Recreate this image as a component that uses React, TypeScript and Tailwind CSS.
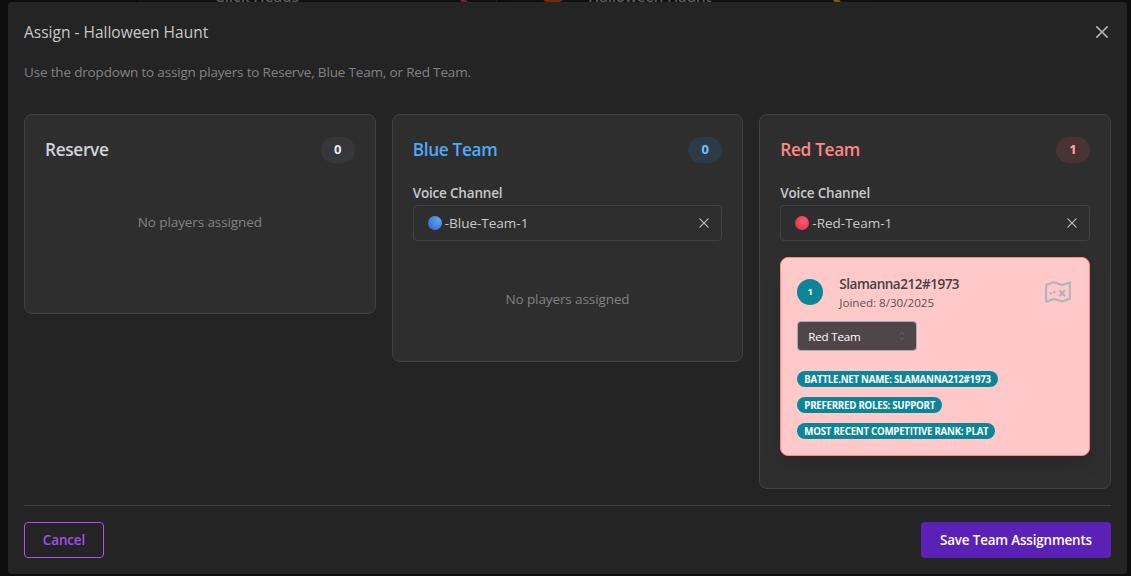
import React from 'react';

function CloseIcon({ className }: { className: string }) {
  return (
    <svg viewBox="0 0 15 15" className={className} fill="currentColor">
      <path
        fillRule="evenodd"
        clipRule="evenodd"
        d="M11.7816 4.03157C12.0062 3.80702 12.0062 3.44295 11.7816 3.2184C11.5571 2.99385 11.193 2.99385 10.9685 3.2184L7.50005 6.68682L4.03164 3.2184C3.80708 2.99385 3.44301 2.99385 3.21846 3.2184C2.99391 3.44295 2.99391 3.80702 3.21846 4.03157L6.68688 7.49999L3.21846 10.9684C2.99391 11.193 2.99391 11.557 3.21846 11.7816C3.44301 12.0061 3.80708 12.0061 4.03164 11.7816L7.50005 8.31316L10.9685 11.7816C11.193 12.0061 11.5571 12.0061 11.7816 11.7816C12.0062 11.557 12.0062 11.193 11.7816 10.9684L8.31322 7.49999L11.7816 4.03157Z"
      />
    </svg>
  );
}

function SortIcon() {
  return (
    <svg viewBox="0 0 15 15" className="size-3.5 text-[#6e6467]" fill="currentColor">
      <path
        fillRule="evenodd"
        clipRule="evenodd"
        d="M4.93179 5.43179C4.75605 5.60753 4.75605 5.89245 4.93179 6.06819C5.10753 6.24392 5.39245 6.24392 5.56819 6.06819L7.49999 4.13638L9.43179 6.06819C9.60753 6.24392 9.89245 6.24392 10.0682 6.06819C10.2439 5.89245 10.2439 5.60753 10.0682 5.43179L7.81819 3.18179C7.73379 3.0974 7.61933 3.04999 7.49999 3.04999C7.38064 3.04999 7.26618 3.0974 7.18179 3.18179L4.93179 5.43179ZM10.0682 9.56819C10.2439 9.39245 10.2439 9.10753 10.0682 8.93179C9.89245 8.75606 9.60753 8.75606 9.43179 8.93179L7.49999 10.8636L5.56819 8.93179C5.39245 8.75606 5.10753 8.75606 4.93179 8.93179C4.75605 9.10753 4.75605 9.39245 4.93179 9.56819L7.18179 11.8182C7.35753 11.9939 7.64245 11.9939 7.81819 11.8182L10.0682 9.56819Z"
      />
    </svg>
  );
}

function TreasureMapIcon() {
  return (
    <svg viewBox="0 0 26 22" className="mt-[7px] mr-0.5 h-[22px] w-[26px] text-[#adb5bd]" fill="none" stroke="currentColor" strokeWidth="2.1">
      <path d="M1.1 3.7 9 1.2l8 2.9 7.9-2.7v16.4L17 20.6l-8-2.7-7.9 2.8Z" strokeLinejoin="round" />
      <path d="m14.2 9.2 5.9 6M20.1 9.2l-5.9 6" strokeWidth="2.3" />
      <circle cx="5.7" cy="12.4" r="1.2" fill="currentColor" stroke="none" />
      <circle cx="9.3" cy="11.2" r="1.2" fill="currentColor" stroke="none" />
    </svg>
  );
}

type TeamProps = {
  name: string;
  count: number;
  titleClass: string;
  pillClass: string;
  className: string;
  children: React.ReactNode;
};

function Team({ name, count, titleClass, pillClass, className, children }: TeamProps) {
  return (
    <section className={`flex flex-col rounded-lg border border-[#424242] bg-[#2e2e2e] px-5 pt-[22px] ${className}`}>
      <div className="flex h-[26px] items-center justify-between">
        <h2 className={`text-[17.3px] font-semibold tracking-[-0.35px] ${titleClass}`}>{name}</h2>
        <span className={`flex h-[26px] w-[34px] items-center justify-center rounded-full text-[13px] font-bold ${pillClass}`}>
          {count}
        </span>
      </div>
      {children}
    </section>
  );
}

function VoiceChannel({ value, dotClass }: { value: string; dotClass: string }) {
  return (
    <div className="mt-5">
      <div className="h-[22px] text-[13.5px] leading-[21px] font-semibold tracking-[-0.18px] text-[#c9c9c9]">Voice Channel</div>
      <div className="flex h-9 items-center rounded border border-[#424242] bg-[#2e2e2e] pr-[9px] pl-[14px]">
        <span className={`mr-[3px] size-[14px] rounded-full ${dotClass}`} />
        <span className="flex-1 pt-px text-[13.5px] text-[#c9c9c9]">{value}</span>
        <CloseIcon className="size-4 text-[#b8b8b8]" />
      </div>
    </div>
  );
}

function Tag({ children }: { children: React.ReactNode }) {
  return (
    <span className="flex h-4 items-center rounded-full bg-[#0c8599] px-[7px] pt-px text-[9.7px] leading-none font-bold tracking-[-0.25px] text-white uppercase">
      {children}
    </span>
  );
}

function Empty() {
  return <p className="text-center text-[13.5px] leading-5 tracking-[-0.1px] text-[#828282]">No players assigned</p>;
}

export default function App() {
  return (
    <div className="relative h-[576px] w-[1131px] overflow-hidden bg-[#0e0e0e] pt-0.5 pl-2 font-['Open_Sans','Noto_Sans',sans-serif]">
      <div className="absolute top-0 left-[140px] h-0.5 w-[357px] border-x border-[#1c1c1c] bg-[#111]" />
      <div className="absolute top-0 left-[513px] h-0.5 w-[358px] border-x border-[#1c1c1c] bg-[#111]" />
      <span className="absolute -top-[14px] left-[215px] text-[15.2px] leading-5 font-semibold text-[#5a5a5a]">Click Heads</span>
      <span className="absolute -top-[14px] left-[588px] text-[15.2px] leading-5 font-semibold tracking-[-0.25px] text-[#5a5a5a]">Halloween Haunt</span>
      <svg className="absolute top-0 left-0 h-0.5 w-[1131px]" viewBox="0 0 1131 2">
        <path d="M460 0h6l2 2h-6z" fill="#7d1f2c" />
        <path d="M543 0h20l-3 2h-14z" fill="#6b2c0c" />
        <path d="M833 0h6l2 2h-6z" fill="#8a550c" />
      </svg>

      <main className="relative flex h-[572px] w-[1119px] flex-col rounded bg-[#242424] px-4">
        <header className="flex h-[60px] items-center justify-between">
          <h1 className="pt-px text-[15.5px] text-[#c9c9c9]">Assign - Halloween Haunt</h1>
          <CloseIcon className="-mr-px size-5 text-[#b8b8b8]" />
        </header>
        <p className="h-[52px] text-[13.5px] leading-5 tracking-[-0.17px] text-[#828282]">
          Use the dropdown to assign players to Reserve, Blue Team, or Red Team.
        </p>

        <div className="grid grid-cols-3 items-start gap-4">
          <Team name="Reserve" count={0} titleClass="text-[#ced4da]" pillClass="bg-[#363739] text-[#e9ecef]" className="h-[200px]">
            <div className="mt-[49px]"><Empty /></div>
          </Team>
          <Team name="Blue Team" count={0} titleClass="text-[#4dabf7]" pillClass="bg-[#2d3b48] text-[#74c0fc]" className="h-[248px]">
            <VoiceChannel value="-Blue-Team-1" dotClass="bg-[radial-gradient(circle_at_75%_25%,#57a8f0,#3f67cf_85%)]" />
            <div className="mt-12"><Empty /></div>
          </Team>
          <Team name="Red Team" count={1} titleClass="text-[#ff8787]" pillClass="bg-[#4a3333] text-[#ffa8a8]" className="h-[375px]">
            <VoiceChannel value="-Red-Team-1" dotClass="bg-[radial-gradient(circle_at_60%_40%,#ff5c74,#d92f4c_85%)]" />
            <article className="mt-4 h-[199px] rounded-lg border border-[#ff8787] bg-[#ffc9c9] px-4 pt-4 shadow-[0_10px_20px_-3px_rgba(0,0,0,0.15)]">
              <div className="flex h-[38px] items-start">
                <span className="mt-[5px] flex size-[26px] items-center justify-center rounded-full bg-[#0c8599] text-[9.5px] font-bold text-white">1</span>
                <div className="ml-4 flex-1">
                  <div className="text-[13.5px] leading-5 font-semibold tracking-[-0.48px] text-[#424242]">Slamanna212#1973</div>
                  <div className="text-[11.6px] leading-[17px] text-[#555]">Joined: 8/30/2025</div>
                </div>
                <TreasureMapIcon />
              </div>
              <div className="mt-[9px] flex h-[30px] w-[120px] items-center justify-between rounded border border-[#9fb0bd] bg-[#50464a] pr-[7px] pl-2.5">
                <span className="pt-0.5 text-[11.6px] tracking-[-0.2px] text-white">Red Team</span>
                <SortIcon />
              </div>
              <div className="mt-5 flex flex-col items-start gap-2.5">
                <Tag>Battle.net Name: Slamanna212#1973</Tag>
                <Tag>Preferred Roles: Support</Tag>
                <Tag>Most Recent Competitive Rank: Plat</Tag>
              </div>
            </article>
          </Team>
        </div>

        <footer className="mt-4 flex items-center justify-between border-t border-[#424242] pt-4">
          <button className="h-9 w-20 rounded border border-[#a855f7] pt-px text-[13.4px] font-semibold tracking-[-0.1px] text-[#a24ff0]">Cancel</button>
          <button className="h-9 w-[190px] rounded bg-[#5b21b6] pt-px text-[13.4px] font-semibold tracking-[-0.15px] text-white">Save Team Assignments</button>
        </footer>
      </main>
    </div>
  );
}
